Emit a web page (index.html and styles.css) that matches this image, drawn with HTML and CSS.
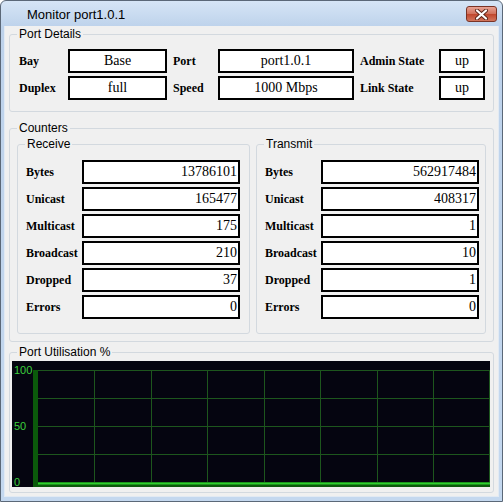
FILE: index.html
```html
<!DOCTYPE html>
<html lang="en">

<head>
    <meta charset="UTF-8">
    <title>Monitor port1.0.1</title>
    <link rel="stylesheet" href="styles.css">
</head>

<body>

    <div class="window">
        <!-- Title Bar -->
        <div class="titlebar">
            <span class="title">Monitor port1.0.1</span>
            <button class="close-btn" title="Close">
                <svg width="15" height="11" viewBox="0 0 15 11">
                    <path d="M3 1.5 L12 9.5 M12 1.5 L3 9.5" stroke="#5a2418" stroke-width="4" stroke-linecap="round" fill="none"/>
                    <path d="M3 1.5 L12 9.5 M12 1.5 L3 9.5" stroke="#ffffff" stroke-width="2.2" stroke-linecap="round" fill="none"/>
                </svg>
            </button>
        </div>

        <div class="client">

            <!-- Port Details -->
            <fieldset class="group">
                <legend>Port Details</legend>
                <div class="details-grid">
                    <span class="label">Bay</span>
                    <div class="field">Base</div>
                    <span class="label label-gap">Port</span>
                    <div class="field">port1.0.1</div>
                    <span class="label label-gap">Admin State</span>
                    <div class="field">up</div>

                    <span class="label">Duplex</span>
                    <div class="field">full</div>
                    <span class="label label-gap">Speed</span>
                    <div class="field">1000 Mbps</div>
                    <span class="label label-gap">Link State</span>
                    <div class="field">up</div>
                </div>
            </fieldset>

            <!-- Counters -->
            <fieldset class="group counters">
                <legend>Counters</legend>
                <div class="counter-cols">
                    <fieldset class="group">
                        <legend>Receive</legend>
                        <div class="counter-rows">
                            <span class="label">Bytes</span>
                            <div class="field num">13786101</div>
                            <span class="label">Unicast</span>
                            <div class="field num">165477</div>
                            <span class="label">Multicast</span>
                            <div class="field num">175</div>
                            <span class="label">Broadcast</span>
                            <div class="field num">210</div>
                            <span class="label">Dropped</span>
                            <div class="field num">37</div>
                            <span class="label">Errors</span>
                            <div class="field num">0</div>
                        </div>
                    </fieldset>
                    <fieldset class="group">
                        <legend>Transmit</legend>
                        <div class="counter-rows">
                            <span class="label">Bytes</span>
                            <div class="field num">562917484</div>
                            <span class="label">Unicast</span>
                            <div class="field num">408317</div>
                            <span class="label">Multicast</span>
                            <div class="field num">1</div>
                            <span class="label">Broadcast</span>
                            <div class="field num">10</div>
                            <span class="label">Dropped</span>
                            <div class="field num">1</div>
                            <span class="label">Errors</span>
                            <div class="field num">0</div>
                        </div>
                    </fieldset>
                </div>
            </fieldset>

            <!-- Port Utilisation -->
            <fieldset class="group utilisation">
                <legend>Port Utilisation %</legend>
                <svg class="chart" width="478" height="126" viewBox="0 0 478 126">
                    <rect width="478" height="126" fill="#050510"/>
                    <g stroke="#1d561d" stroke-width="1">
                        <line x1="26" y1="9.5" x2="478" y2="9.5"/>
                        <line x1="26" y1="37.5" x2="478" y2="37.5"/>
                        <line x1="26" y1="65.5" x2="478" y2="65.5"/>
                        <line x1="26" y1="93.5" x2="478" y2="93.5"/>
                        <line x1="82.5" y1="9" x2="82.5" y2="121"/>
                        <line x1="139.5" y1="9" x2="139.5" y2="121"/>
                        <line x1="195.5" y1="9" x2="195.5" y2="121"/>
                        <line x1="252.5" y1="9" x2="252.5" y2="121"/>
                        <line x1="308.5" y1="9" x2="308.5" y2="121"/>
                        <line x1="365.5" y1="9" x2="365.5" y2="121"/>
                        <line x1="421.5" y1="9" x2="421.5" y2="121"/>
                        <line x1="477.5" y1="9" x2="477.5" y2="121"/>
                    </g>
                    <rect x="21" y="9" width="5" height="117" fill="#0b5a0b"/>
                    <rect x="21" y="121" width="457" height="5" fill="#0b5a0b"/>
                    <rect x="26" y="121.5" width="452" height="2" fill="#2ecf2e"/>
                    <g class="axis-text">
                        <text x="2" y="13">100</text>
                        <text x="2" y="69">50</text>
                        <text x="2" y="125">0</text>
                    </g>
                </svg>
            </fieldset>

        </div>
    </div>

</body>

</html>
```

FILE: styles.css
```css
body {
    margin: 0;
    padding: 0;
    background-color: #ffffff;
    font-family: "Liberation Sans", Arial, sans-serif;
}

.window {
    width: 503px;
    height: 502px;
    box-sizing: border-box;
    border: 1px solid #5b6878;
    border-radius: 6px 6px 0 0;
    background: linear-gradient(#d6e5f6, #bdd2eb 26px, #c4d8ef);
    padding: 0 3px 4px;
    display: flex;
    flex-direction: column;
}

/* Title bar */
.titlebar {
    height: 25px;
    display: flex;
    align-items: flex-start;
    justify-content: space-between;
}

.title {
    padding: 6px 0 0 23px;
    font-size: 13px;
    line-height: 15px;
    color: #000;
}

.close-btn {
    width: 31px;
    height: 16px;
    margin: 5px 2px 0 0;
    padding: 0;
    border: 1px solid #7a3325;
    border-radius: 3px;
    background: linear-gradient(#e8a394, #d0705a 50%, #c0462c 51%, #d2765d);
    display: flex;
    align-items: center;
    justify-content: center;
}

/* Client area */
.client {
    flex: 1;
    background-color: #f0f0f0;
    border: 1px solid #e2eaf3;
    border-top: none;
    padding: 1px 4px 0;
}

.group {
    margin: 0;
    padding: 0;
    border: 1px solid #d3d9df;
    border-radius: 3px;
    min-width: 0;
}

.group legend {
    margin-left: 7px;
    padding: 0 2px;
    font-size: 12px;
    line-height: 14px;
    color: #000;
}

/* Port details */
.details-grid {
    display: grid;
    grid-template-columns: 49px 99px 51px 136px 85px 46px;
    grid-auto-rows: 24px;
    row-gap: 3px;
    margin: 8px 0 11px 9px;
}

.label {
    font-family: "Liberation Serif", "Times New Roman", serif;
    font-weight: bold;
    font-size: 12px;
    align-self: center;
    color: #000;
    white-space: nowrap;
}

.label-gap {
    padding-left: 6px;
}

.field {
    box-sizing: border-box;
    height: 24px;
    border: 2px solid #000;
    background-color: #fff;
    font-family: "Liberation Serif", "Times New Roman", serif;
    font-size: 14px;
    line-height: 20px;
    text-align: center;
    color: #000;
}

.field.num {
    text-align: right;
    padding-right: 1px;
}

/* Counters */
.counters {
    margin-top: 9px;
}

.counter-cols {
    display: grid;
    grid-template-columns: 233px 230px;
    column-gap: 6px;
    padding: 2px 7px 7px;
}

.counter-rows {
    display: grid;
    grid-template-columns: 56px 158px;
    grid-auto-rows: 24px;
    row-gap: 3px;
    padding: 9px 8px 14px;
}

/* Port utilisation chart */
.utilisation {
    margin-top: 3px;
}

.chart {
    display: block;
    margin: 2px 3px 5px 2px;
}

.axis-text {
    font-family: "Liberation Sans", Arial, sans-serif;
    font-size: 11px;
    fill: #3ccf3c;
}
```
